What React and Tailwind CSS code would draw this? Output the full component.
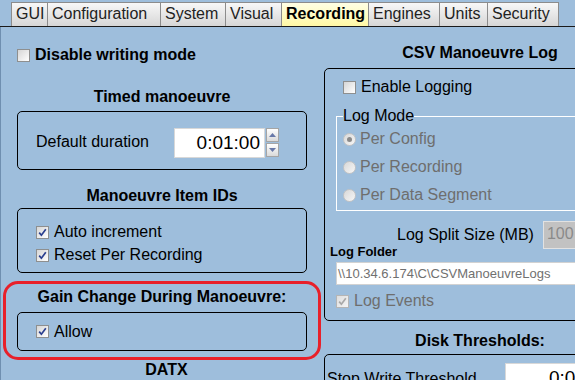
import React from 'react';

const tabs = [
  { label: 'GUI', w: 'w-[37px]' },
  { label: 'Configuration', w: 'w-[114px]' },
  { label: 'System', w: 'w-[66px]' },
  { label: 'Visual', w: 'w-[57px]' },
  { label: 'Recording', w: 'w-[88px]', active: true },
  { label: 'Engines', w: 'w-[72px]' },
  { label: 'Units', w: 'w-[49px]' },
  { label: 'Security', w: 'w-[72px]' },
];

// little win-classic style checkbox
const Check = ({ checked, disabled }) => (
  <span
    className={`w-[13px] h-[13px] shrink-0 border flex items-center justify-center bg-linear-to-br ${
      disabled ? 'border-[#b5b5b5] from-[#dedede] to-[#f4f4f4]' : 'border-[#8e8f8f] from-[#d6d6d6] to-white'
    }`}
  >
    {checked && (
      <svg width="11" height="11" viewBox="0 0 11 11">
        <path
          d="M2.2 5.6 L4.4 8.2 L8.8 2.2"
          fill="none"
          stroke={disabled ? '#a8a8a8' : '#2a3f8f'}
          strokeWidth="1.7"
        />
      </svg>
    )}
  </span>
);

const Radio = ({ selected }) => (
  <span className="w-[13px] h-[13px] shrink-0 rounded-full border border-[#c4c4c4] bg-linear-to-br from-[#d8d8d8] to-[#f6f6f6] flex items-center justify-center">
    {selected && <span className="w-[5px] h-[5px] rounded-full bg-[#8a8a8a]" />}
  </span>
);

const Title = ({ children, className = '' }) => (
  <div className={`text-center font-bold text-[16px] leading-[18px] text-black ${className}`}>{children}</div>
);

const SpinBtn = ({ up }) => (
  <span className="w-[13px] h-[14px] border border-[#a5a5a5] bg-linear-to-b from-white to-[#dadada] flex items-center justify-center">
    <svg width="7" height="4" viewBox="0 0 7 4">
      <path d={up ? 'M0 4 L3.5 0 L7 4 Z' : 'M0 0 L3.5 4 L7 0 Z'} fill="#6878a8" />
    </svg>
  </span>
);

export default function App() {
  return (
    <div className="w-[575px] h-[380px] overflow-hidden bg-[#9ebedc] text-black font-['Liberation_Sans',Arial,sans-serif]">
      {/* Tab strip */}
      <div className="h-[27px] flex items-end pl-[11px] border-b border-[#1a1a1a]">
        {tabs.map((t) => (
          <div
            key={t.label}
            className={`${t.w} h-[24px] -mr-px border border-b-0 border-[#8c8c8c] pl-[4px] text-[16px] leading-[22px] whitespace-nowrap ${
              t.active
                ? 'bg-linear-to-b from-[#ffffe4] to-[#fff8a4] font-bold text-black'
                : 'bg-linear-to-b from-[#f8f8f8] to-[#d6d6d6] text-[#222]'
            }`}
          >
            {t.label}
          </div>
        ))}
      </div>

      <div className="flex border-l border-[#6f8fb0] h-[353px]">
        {/* Left column */}
        <div className="w-[323px] shrink-0 pl-[16px] pr-[17px]">
          <div className="mt-[19px] h-[18px] flex items-center gap-[5px]">
            <Check />
            <span className="font-bold text-[16px] leading-[18px]">Disable writing mode</span>
          </div>

          <Title className="mt-[24px]">Timed manoeuvre</Title>
          <div className="mt-[5px] h-[59px] border border-black rounded-[5px] pl-[18px] pt-[16px] flex items-center">
            <span className="w-[138px] text-[16px] leading-[18px] self-center -mt-[14px]">Default duration</span>
            <div className="w-[91px] h-[30px] bg-white border border-[#d8d8d8] text-right pr-[4px] text-[19px] leading-[28px] self-start">
              0:01:00
            </div>
            <div className="ml-[1px] flex flex-col gap-[1px] self-start">
              <SpinBtn up />
              <SpinBtn />
            </div>
          </div>

          <Title className="mt-[17px]">Manoeuvre Item IDs</Title>
          <div className="mt-[3px] h-[65px] border border-black rounded-[5px] pl-[18px] pt-[14px] flex flex-col gap-[5px]">
            <div className="h-[18px] flex items-center gap-[5px]">
              <Check checked />
              <span className="text-[16px] leading-[18px]">Auto increment</span>
            </div>
            <div className="h-[18px] flex items-center gap-[5px]">
              <Check checked />
              <span className="text-[16px] leading-[18px]">Reset Per Recording</span>
            </div>
          </div>

          {/* highlighted section */}
          <div className="-ml-[14px] w-[318px] mt-[8px] border-[3px] border-[#e8202a] rounded-[15px] pt-[4px] pb-[6px] px-[11px]">
            <Title>Gain Change During Manoeuvre:</Title>
            <div className="mt-[6px] h-[39px] border border-black rounded-[5px] pl-[18px] flex items-center">
              <div className="flex items-center gap-[5px]">
                <Check checked />
                <span className="text-[16px] leading-[18px]">Allow</span>
              </div>
            </div>
          </div>

          <Title className="mt-[1px] pl-[9px]">DATX</Title>
        </div>

        {/* Right column */}
        <div className="w-[312px] shrink-0">
          <Title className="mt-[17px]">CSV Manoeuvre Log</Title>
          <div className="mt-[6px] h-[253px] border border-black rounded-[5px] pt-[9px]">
            <div className="ml-[18px] h-[18px] flex items-center gap-[5px]">
              <Check />
              <span className="text-[16px] leading-[18px]">Enable Logging</span>
            </div>

            <fieldset className="mt-[11px] ml-[11px] w-[290px] border border-white pl-[6px] pb-[6px]">
              <legend className="text-[16px] leading-[18px]">Log Mode</legend>
              <div className="mt-[5px] flex flex-col gap-[10px] text-[#6e6e6e]">
                <div className="h-[18px] flex items-center gap-[4px]">
                  <Radio selected />
                  <span className="text-[16px] leading-[18px]">Per Config</span>
                </div>
                <div className="h-[18px] flex items-center gap-[4px]">
                  <Radio />
                  <span className="text-[16px] leading-[18px]">Per Recording</span>
                </div>
                <div className="h-[18px] flex items-center gap-[4px]">
                  <Radio />
                  <span className="text-[16px] leading-[18px]">Per Data Segment</span>
                </div>
              </div>
            </fieldset>

            <div className="mt-[10px] ml-[72px] flex items-center">
              <span className="text-[16px] leading-[18px]">Log Split Size (MB)</span>
              <div className="ml-[9px] w-[60px] h-[28px] bg-[#c2c2c2] border border-[#e2e2e2] pl-[3px] text-[16px] leading-[24px] text-[#8a8a8a]">
                100
              </div>
            </div>

            <div className="-mt-[5px] ml-[5px] text-[13px] leading-[15px] font-bold">Log Folder</div>
            <div className="mt-[3px] ml-[11px] w-[300px] h-[23px] bg-white border border-[#d2d2d2] pl-[1px] text-[13px] leading-[21px] text-[#707070]">
              \\10.34.6.174\C\CSVManoeuvreLogs
            </div>

            <div className="mt-[7px] ml-[11px] h-[18px] flex items-center gap-[5px] text-[#6e6e6e]">
              <Check checked disabled />
              <span className="text-[16px] leading-[18px]">Log Events</span>
            </div>
          </div>

          <Title className="mt-[11px]">Disk Thresholds:</Title>
          <div className="mt-[4px] h-[60px] border border-black rounded-[5px] flex items-start">
            <span className="mt-[15px] ml-[2px] w-[178px] text-[16px] leading-[18px] whitespace-nowrap">Stop Write Threshold</span>
            <div className="mt-[8px] w-[100px] h-[30px] bg-white border border-[#d8d8d8] pl-[43px] text-[19px] leading-[28px]">
              0:00:00
            </div>
          </div>
        </div>
      </div>
    </div>
  );
}
